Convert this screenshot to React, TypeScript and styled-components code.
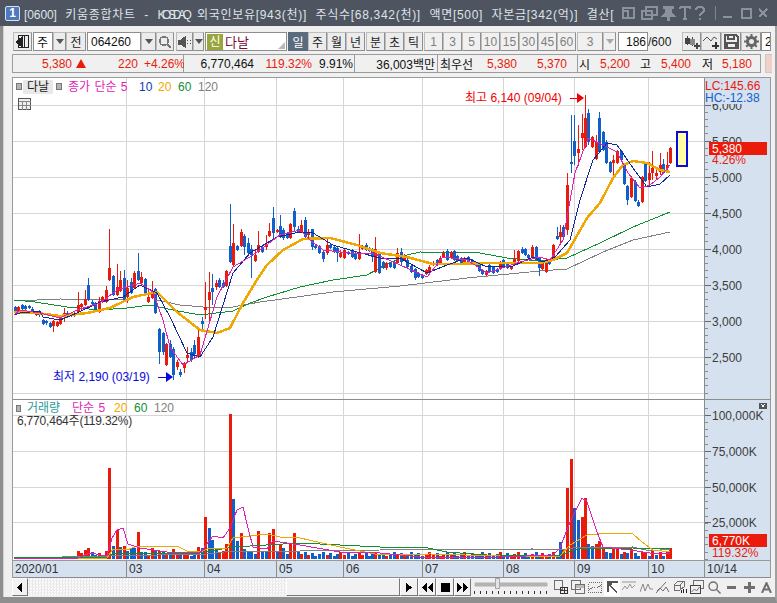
import styled, { createGlobalStyle } from 'styled-components';

const FONT = '"Liberation Sans", "Noto Sans CJK KR", sans-serif';
const RED = '#ea1b0b';
const BLUE = '#1160c9';
const NAVY = '#12289a';
const PINK = '#e01fb4';
const ORANGE = '#f0a800';
const GREEN = '#109033';
const GRAY = '#808080';
const GRID = '#d6d6d6';
const AXIS = '#d6e1ef';

type Candle = [number, number, number, number, number, 'r' | 'b'];

// x, body top, body bottom, wick top, wick bottom (page pixels)
const candles: Candle[] = [
  [15, 307, 311, 306, 312, 'b'], [18, 307, 312, 306, 313, 'r'], [22, 305, 309, 304, 310, 'b'], [25, 306, 309, 305, 310, 'b'],
  [29, 306, 308, 305, 309, 'b'], [32, 309, 313, 307, 314, 'b'], [36, 312, 315, 311, 316, 'r'], [39, 312, 315, 310, 317, 'b'],
  [43, 320, 324, 319, 325, 'b'], [46, 321, 323, 320, 325, 'b'], [50, 323, 327, 322, 328, 'b'], [53, 321, 326, 320, 332, 'r'],
  [57, 322, 326, 321, 327, 'r'], [60, 317, 324, 316, 325, 'r'], [64, 313, 317, 308, 322, 'r'], [67, 313, 316, 311, 318, 'b'],
  [71, 313, 316, 312, 317, 'b'], [74, 313, 316, 312, 317, 'r'], [78, 305, 312, 292, 313, 'r'], [81, 304, 307, 303, 311, 'r'],
  [85, 299, 305, 290, 306, 'r'], [88, 285, 300, 278, 301, 'b'], [92, 302, 304, 300, 306, 'b'], [95, 303, 311, 302, 312, 'b'],
  [99, 301, 312, 297, 313, 'r'], [102, 297, 302, 296, 303, 'r'], [106, 290, 302, 286, 303, 'r'], [109, 268, 280, 229, 281, 'r'],
  [113, 276, 295, 275, 296, 'b'], [117, 287, 295, 264, 296, 'r'], [120, 280, 291, 271, 292, 'r'], [124, 278, 300, 270, 302, 'b'],
  [127, 288, 297, 280, 303, 'r'], [131, 282, 293, 278, 294, 'b'], [134, 273, 288, 271, 289, 'r'], [138, 271, 280, 253, 281, 'b'],
  [141, 277, 283, 272, 284, 'r'], [145, 279, 294, 278, 295, 'b'], [148, 297, 302, 290, 303, 'r'], [152, 291, 298, 281, 299, 'r'],
  [155, 289, 313, 288, 314, 'b'], [159, 329, 352, 328, 364, 'b'], [163, 333, 352, 332, 355, 'b'], [166, 344, 365, 343, 366, 'r'],
  [170, 344, 357, 340, 358, 'b'], [173, 349, 375, 347, 380, 'b'], [177, 362, 367, 360, 370, 'r'], [180, 372, 375, 369, 377, 'b'],
  [184, 363, 368, 362, 373, 'r'], [187, 355, 358, 347, 362, 'r'], [191, 352, 360, 348, 362, 'b'], [194, 345, 354, 340, 358, 'b'],
  [198, 337, 357, 328, 358, 'r'], [202, 321, 324, 317, 330, 'b'], [205, 307, 310, 282, 319, 'r'], [209, 292, 300, 272, 323, 'r'],
  [212, 288, 292, 274, 305, 'b'], [216, 283, 287, 280, 290, 'r'], [219, 280, 287, 278, 288, 'b'], [223, 283, 287, 280, 288, 'b'],
  [226, 271, 286, 270, 287, 'r'], [230, 246, 262, 204, 263, 'b'], [233, 243, 265, 224, 266, 'r'], [237, 246, 250, 245, 251, 'b'],
  [241, 232, 246, 229, 247, 'r'], [244, 236, 247, 234, 255, 'b'], [248, 243, 253, 238, 254, 'b'], [251, 249, 255, 245, 278, 'b'],
  [255, 255, 261, 250, 262, 'r'], [258, 245, 252, 231, 253, 'r'], [262, 247, 252, 246, 253, 'b'], [266, 244, 247, 235, 250, 'r'],
  [269, 231, 236, 223, 237, 'r'], [273, 218, 233, 207, 240, 'b'], [277, 230, 232, 229, 233, 'r'], [280, 226, 235, 215, 238, 'b'],
  [283, 230, 238, 228, 240, 'b'], [287, 233, 238, 232, 239, 'b'], [290, 224, 238, 223, 239, 'r'], [294, 211, 227, 208, 232, 'b'],
  [298, 229, 232, 226, 233, 'b'], [301, 225, 232, 220, 233, 'r'], [305, 220, 237, 217, 240, 'b'], [308, 232, 235, 229, 238, 'r'],
  [312, 229, 247, 229, 250, 'b'], [315, 246, 248, 245, 249, 'b'], [319, 246, 253, 245, 254, 'b'], [323, 252, 259, 250, 262, 'b'],
  [327, 245, 253, 239, 255, 'r'], [330, 245, 248, 243, 249, 'b'], [334, 247, 252, 245, 253, 'b'], [337, 248, 253, 247, 262, 'b'],
  [340, 253, 257, 250, 258, 'r'], [344, 250, 258, 248, 259, 'r'], [348, 252, 254, 251, 255, 'b'], [352, 250, 257, 249, 258, 'b'],
  [355, 253, 259, 252, 260, 'b'], [359, 252, 259, 234, 260, 'r'], [362, 247, 249, 245, 250, 'r'], [366, 245, 250, 243, 251, 'b'],
  [369, 248, 251, 247, 252, 'b'], [372, 249, 257, 248, 262, 'b'], [375, 249, 272, 237, 273, 'r'], [379, 253, 273, 252, 274, 'b'],
  [383, 262, 268, 261, 269, 'b'], [386, 263, 268, 262, 270, 'r'], [390, 263, 267, 262, 268, 'b'], [394, 262, 268, 260, 269, 'b'],
  [397, 253, 263, 248, 264, 'r'], [401, 252, 262, 248, 265, 'b'], [404, 255, 260, 254, 261, 'r'], [407, 260, 267, 257, 268, 'b'],
  [411, 266, 272, 265, 273, 'b'], [415, 269, 278, 268, 280, 'b'], [418, 273, 277, 272, 278, 'b'], [422, 275, 278, 274, 279, 'b'],
  [426, 270, 274, 269, 275, 'r'], [429, 267, 273, 265, 274, 'r'], [433, 263, 265, 261, 266, 'r'], [437, 260, 265, 259, 266, 'b'],
  [440, 258, 263, 256, 264, 'r'], [443, 253, 257, 251, 258, 'r'], [447, 251, 260, 249, 261, 'b'], [451, 252, 258, 251, 259, 'r'],
  [454, 251, 260, 250, 261, 'b'], [457, 256, 261, 255, 262, 'b'], [461, 258, 263, 257, 264, 'b'], [464, 258, 264, 257, 265, 'r'],
  [468, 257, 263, 256, 264, 'b'], [472, 260, 264, 259, 265, 'b'], [476, 263, 266, 262, 267, 'b'], [479, 265, 271, 264, 272, 'b'],
  [482, 270, 274, 269, 275, 'b'], [486, 271, 275, 270, 276, 'r'], [489, 265, 272, 262, 273, 'b'], [493, 267, 273, 266, 274, 'b'],
  [497, 269, 272, 268, 273, 'b'], [500, 263, 269, 261, 270, 'r'], [503, 260, 267, 259, 268, 'b'], [507, 263, 268, 262, 269, 'b'],
  [511, 267, 269, 266, 270, 'r'], [514, 259, 265, 250, 266, 'r'], [518, 251, 261, 250, 262, 'r'], [522, 249, 253, 247, 254, 'b'],
  [525, 249, 255, 248, 256, 'b'], [528, 255, 258, 254, 259, 'b'], [532, 247, 257, 245, 258, 'r'], [536, 247, 260, 246, 261, 'b'],
  [539, 258, 268, 257, 276, 'b'], [542, 263, 269, 262, 270, 'r'], [546, 260, 272, 259, 273, 'r'], [549, 261, 264, 260, 265, 'b'],
  [553, 245, 260, 244, 261, 'r'], [557, 236, 239, 227, 240, 'b'], [560, 232, 237, 225, 243, 'r'], [563, 227, 237, 225, 240, 'b'],
  [567, 185, 230, 173, 235, 'r'], [571, 162, 164, 115, 173, 'b'], [574, 141, 156, 115, 165, 'b'], [578, 149, 153, 125, 166, 'r'],
  [582, 133, 138, 114, 150, 'r'], [585, 118, 147, 95, 148, 'r'], [588, 113, 142, 109, 145, 'b'], [592, 137, 147, 136, 148, 'r'],
  [596, 142, 159, 135, 160, 'r'], [599, 118, 152, 112, 153, 'b'], [603, 132, 150, 131, 151, 'b'], [606, 142, 163, 140, 164, 'b'],
  [610, 162, 172, 161, 173, 'b'], [613, 160, 163, 155, 176, 'r'], [617, 151, 163, 150, 164, 'r'], [621, 151, 160, 150, 161, 'b'],
  [624, 164, 184, 163, 185, 'b'], [627, 186, 200, 185, 205, 'b'], [631, 178, 197, 176, 198, 'r'], [635, 182, 201, 180, 202, 'b'],
  [638, 202, 206, 200, 207, 'b'], [642, 177, 202, 176, 203, 'r'], [645, 164, 181, 162, 182, 'b'], [649, 173, 180, 162, 185, 'r'],
  [652, 168, 173, 151, 180, 'r'], [656, 173, 176, 170, 180, 'r'], [660, 165, 172, 153, 175, 'r'], [663, 164, 173, 159, 174, 'b'],
  [667, 165, 168, 152, 170, 'r'], [670, 148, 163, 147, 164, 'r'],
];

const priceLines: { d: string; color: string; w: number }[] = [
  { color: GRAY, w: 1, d: '14,301 60,299 127,300 157,300 180,305 203,307 233,307 260,302 275,300 333,292 400,286 467,278 540,271 567,269 603,252 633,240 670,232' },
  { color: GREEN, w: 1, d: '14,300 35,302 67,307 100,310 127,308 150,305 173,310 200,315 233,311 250,303 267,297 300,287 333,280 367,275 387,264 407,255 420,252 480,253 507,258 540,261 567,258 600,243 633,227 670,212' },
  { color: ORANGE, w: 2.5, d: '14,312 37,313 60,316 87,313 110,308 133,297 157,292 177,312 200,330 217,333 230,328 243,303 255,283 267,265 283,250 303,239 330,238 357,245 380,253 407,257 433,264 453,264 493,263 540,263 553,260 567,253 587,218 600,203 613,178 623,165 633,161 647,163 660,170 670,172' },
  { color: NAVY, w: 1, d: '14,315 20,313 40,311 43,317 60,320 77,313 100,302 123,297 140,285 157,293 170,317 187,353 200,357 213,337 233,273 250,253 277,237 300,232 313,233 333,245 357,252 380,258 400,258 427,273 447,265 467,258 487,267 513,266 533,257 543,262 555,257 570,240 580,200 593,160 607,143 617,145 633,168 647,187 660,184 670,175' },
  { color: PINK, w: 1, d: '14,315 20,310 40,313 60,318 77,310 100,303 117,290 140,283 153,292 163,320 170,347 183,365 200,355 217,297 233,267 253,255 280,235 300,230 310,240 323,250 350,253 373,253 400,265 427,277 443,257 467,260 487,273 520,262 540,257 550,260 563,240 575,173 588,138 603,145 617,152 628,173 640,188 650,185 660,177 670,165' },
];

const volumeLines: { d: string; color: string; w: number }[] = [
  { color: GRAY, w: 1, d: '14,558 110,556 207,554 233,551 300,551 380,550 533,549 560,550 573,548 633,547 650,551 670,549' },
  { color: GREEN, w: 1, d: '14,557 107,557 113,554 200,553 233,547 300,543 380,547 423,547 447,552 500,556 560,555 577,549 633,548 650,549 670,548' },
  { color: ORANGE, w: 1, d: '14,558 107,558 113,549 127,550 137,546 177,546 187,551 203,551 207,549 227,548 233,538 267,534 280,537 300,538 340,547 380,555 430,554 500,556 560,556 570,545 587,535 607,533 633,534 642,542 653,550 670,552' },
  { color: PINK, w: 1, d: '14,558 78,558 90,553 107,556 112,538 117,530 123,528 128,544 140,548 167,552 200,553 213,536 223,538 230,528 237,510 243,507 248,528 253,547 267,549 273,541 300,545 340,552 380,553 430,558 500,557 553,555 560,548 570,522 582,498 587,502 597,532 603,547 630,550 650,553 670,554' },
];

// volume bars that stand out; the others stay low and take the candle colour
const volumeBars: [number, number, 'r' | 'b'][] = [
  [78, 551, 'r'], [85, 550, 'r'], [88, 548, 'r'], [106, 551, 'r'], [109, 468, 'r'], [113, 546, 'b'], [117, 530, 'r'], [120, 547, 'b'], [124, 546, 'r'],
  [127, 551, 'b'], [131, 548, 'b'], [134, 548, 'b'], [138, 532, 'r'], [141, 552, 'b'], [152, 548, 'r'], [155, 551, 'b'], [159, 551, 'r'], [173, 549, 'r'],
  [198, 547, 'r'], [202, 548, 'b'], [205, 517, 'r'], [209, 528, 'b'], [212, 540, 'b'], [216, 549, 'b'], [219, 552, 'r'], [223, 551, 'r'], [226, 544, 'r'],
  [230, 414, 'r'], [233, 499, 'b'], [237, 541, 'b'], [241, 533, 'r'], [244, 549, 'b'], [248, 552, 'b'], [251, 552, 'b'], [255, 554, 'b'], [258, 531, 'r'],
  [262, 552, 'b'], [266, 552, 'b'], [269, 533, 'r'], [273, 529, 'r'], [277, 552, 'b'], [280, 544, 'r'], [283, 548, 'b'], [287, 554, 'b'], [290, 544, 'r'],
  [294, 533, 'r'], [298, 552, 'b'], [556, 540, 'r'], [560, 542, 'b'], [563, 549, 'r'], [567, 488, 'r'], [571, 459, 'r'], [574, 508, 'b'], [578, 520, 'b'],
  [582, 517, 'r'], [585, 498, 'r'], [588, 544, 'b'], [592, 546, 'b'], [596, 544, 'r'], [599, 541, 'r'], [603, 547, 'r'], [606, 552, 'b'], [610, 553, 'b'],
  [613, 549, 'r'], [617, 549, 'r'], [621, 554, 'b'], [624, 552, 'r'], [627, 553, 'b'], [631, 549, 'r'], [635, 553, 'b'], [638, 556, 'b'], [642, 552, 'r'],
  [645, 552, 'r'], [649, 556, 'b'], [652, 550, 'r'], [656, 555, 'b'], [660, 552, 'r'], [663, 556, 'b'], [667, 552, 'r'], [670, 548, 'r'],
];

const monthLines = [126, 204, 276, 343, 422, 503, 574, 648];
const priceRows = [105, 141, 177, 213, 249, 285, 321, 357, 393];
const volumeRows = [415, 451, 487, 522];

const priceLabels: [number, string][] = [[105, '6,000'], [141, '5,500'], [177, '5,000'], [213, '4,500'], [249, '4,000'], [285, '3,500'], [321, '3,000'], [357, '2,500']];
const volumeLabels: [number, string][] = [[415, '100,000K'], [451, '75,000K'], [487, '50,000K'], [522, '25,000K']];

const timeCells: [string, number][] = [['2020/01', 113], ['03', 78], ['04', 72], ['05', 67], ['06', 79], ['07', 81], ['08', 71], ['09', 74], ['10', 56], ['10/14', 66]];

const colorOf = (c: 'r' | 'b') => (c === 'r' ? RED : BLUE);

const Global = createGlobalStyle`
  html, body { margin: 0; padding: 0; background: #f0f0f0; }
  body { font-family: ${FONT}; font-size: 12px; }
`;

const Window = styled.div`
  width: 777px;
  height: 603px;
  display: flex;
  flex-direction: column;
  overflow: hidden;
  background: #f0f0f0;
`;

const TitleBar = styled.div`
  height: 26px;
  flex: none;
  display: flex;
  align-items: center;
  padding-left: 5px;
  background: #4e5560;
  color: #dfe3e8;
  box-sizing: border-box;
`;

const AppBadge = styled.div`
  width: 13px;
  height: 13px;
  flex: none;
  border: 1px solid #d8e2f2;
  border-radius: 2px;
  background: #4f79bd;
  color: #fff;
  font: bold 12px/13px ${FONT};
  text-align: center;
`;

const TitleText = styled.div`
  width: 594px;
  margin-left: 4px;
  flex: none;
  font-size: 12px;
  letter-spacing: 0.7px;
  word-spacing: 4.5px;
  white-space: nowrap;
  overflow: hidden;
`;

const NarrowWord = styled.span<{ $ls: number }>`
  letter-spacing: ${(p) => p.$ls}px;
`;

const TitleTools = styled.div`
  display: flex;
  align-items: center;
  height: 100%;
  margin-left: 3px;
  color: #8b929b;
`;

const TitleDivider = styled.span`
  width: 1px;
  height: 14px;
  margin: 0 7px 0 9px;
  background: #80868e;
`;

const Content = styled.div`
  flex: 1;
  display: flex;
  flex-direction: column;
  box-sizing: border-box;
  padding: 6px 4px 0 8px;
  border-left: 3px solid #8e8e8e;
  border-right: 2px solid #a0a0a0;
  border-bottom: 6px solid #8e8e8e;
  box-shadow: inset 1px 0 #d0d0d0;
  min-height: 0;
`;

const Toolbar = styled.div`
  height: 19px;
  flex: none;
  margin-left: 2px;
  display: flex;
  align-items: stretch;
`;

const ToolButton = styled.div<{ $w: number; $gap?: number; $active?: boolean; $muted?: boolean }>`
  width: ${(p) => p.$w}px;
  margin-left: ${(p) => p.$gap ?? 0}px;
  flex: none;
  box-sizing: border-box;
  display: flex;
  align-items: center;
  justify-content: center;
  border: 1px solid ${(p) => (p.$active ? '#5a6b7e' : '#bdbdbd')};
  border-right-color: ${(p) => (p.$active ? '#5a6b7e' : '#8f8f8f')};
  border-bottom-color: ${(p) => (p.$active ? '#5a6b7e' : '#8f8f8f')};
  background: ${(p) => (p.$active ? '#5a6b7e' : p.$muted ? '#f0f0f0' : '#ececec')};
  color: ${(p) => (p.$active ? '#fff' : p.$muted ? '#7f7f7f' : '#1c1c1c')};
  font-size: 12px;
  overflow: hidden;
`;

const FieldBox = styled.div<{ $w: number; $gap?: number }>`
  width: ${(p) => p.$w}px;
  margin-left: ${(p) => p.$gap ?? 0}px;
  flex: none;
  box-sizing: border-box;
  display: flex;
  align-items: center;
  padding: 0 3px;
  border: 1px solid #8e8e8e;
  background: #fff;
  color: #111;
  font-size: 12px;
  overflow: hidden;
  white-space: nowrap;
`;

const NumberField = styled(FieldBox)`
  justify-content: flex-end;
  padding: 0 1px 0 0;
`;

const NameBox = styled(FieldBox)`
  position: relative;
  padding: 0 1px;
  color: #7a0a3c;
  font-size: 13px;
`;

const NewTag = styled.span`
  width: 16px;
  height: 16px;
  margin-right: 2px;
  background: #9aa63c;
  color: #fff;
  font-size: 12px;
  line-height: 16px;
  text-align: center;
`;

const ResizeCorner = styled.span`
  position: absolute;
  right: 1px;
  bottom: 1px;
  width: 0;
  height: 0;
  border-left: 7px solid transparent;
  border-bottom: 7px solid #b9b9b9;
`;

const Caret = styled.span<{ $light?: boolean }>`
  width: 0;
  height: 0;
  border-left: 4px solid transparent;
  border-right: 4px solid transparent;
  border-top: 5px solid ${(p) => (p.$light ? '#a8a8a8' : '#555')};
`;

const PageTotal = styled.div`
  width: 26px;
  flex: none;
  display: flex;
  align-items: center;
  color: #222;
  font-size: 12px;
`;

const InfoBar = styled.div`
  height: 19px;
  flex: none;
  margin: 3px 0 4px 1px;
  display: flex;
  align-items: stretch;
`;

const InfoCell = styled.div<{ $w: number }>`
  width: ${(p) => p.$w}px;
  flex: none;
  box-sizing: border-box;
  display: flex;
  align-items: center;
  background: #f0f0f0;
  border: 1px solid #9c9c9c;
  border-left-width: 0;
  &:first-child { border-left-width: 1px; }
`;

const Value = styled.span<{ $w: number; $color?: string; $left?: boolean }>`
  width: ${(p) => p.$w}px;
  flex: none;
  box-sizing: border-box;
  padding-left: ${(p) => (p.$left ? 2 : 0)}px;
  text-align: ${(p) => (p.$left ? 'left' : 'right')};
  color: ${(p) => p.$color ?? '#111'};
  white-space: nowrap;
`;

const UpMark = styled.span`
  width: 0;
  height: 0;
  margin: 0 4px 0 4px;
  border-left: 5px solid transparent;
  border-right: 5px solid transparent;
  border-bottom: 9px solid ${RED};
`;

const PinkSwatch = styled.div`
  width: 6px;
  margin-left: 4px;
  flex: none;
  background: #f2d0c8;
  border: 1px solid #c8c8c8;
  border-right: 0;
`;

const ChartFrame = styled.div`
  width: 759px;
  margin-left: 1px;
  flex: none;
  box-sizing: border-box;
  border: 1px solid #9a9a9a;
  border-bottom: 0;
  background: #fff;
`;

const PanePlot = styled.svg`
  display: block;
  width: 757px;
  font-family: ${FONT};
`;

const PaneDivider = styled.div`
  height: 1px;
  background: #8c8c8c;
`;

const TimeAxis = styled.div`
  height: 18px;
  display: flex;
  box-sizing: border-box;
  border-top: 1px solid #9a9a9a;
  border-bottom: 1px solid #8c8c8c;
  background: ${AXIS};
`;

const TimeCell = styled.div<{ $w: number }>`
  width: ${(p) => p.$w}px;
  flex: none;
  box-sizing: border-box;
  padding-left: 2px;
  border-left: 1px solid #8c8c8c;
  color: #333;
  line-height: 16px;
  &:first-child { border-left: 0; }
`;

const ControlRow = styled.div`
  height: 18px;
  width: 760px;
  margin-left: 1px;
  flex: none;
  display: flex;
  align-items: stretch;
`;

const ScrollButton = styled.div<{ $w: number }>`
  width: ${(p) => p.$w}px;
  flex: none;
  box-sizing: border-box;
  display: flex;
  align-items: center;
  justify-content: center;
  background: #f2f2f2;
  border: 1px solid #fff;
  border-right-color: #777;
  border-bottom-color: #777;
  color: #000;
`;

const ScrollTrack = styled.div`
  width: 258px;
  flex: none;
  background: repeating-conic-gradient(#e9e9e9 0 25%, #fcfcfc 0 50%) 0 0 / 3px 3px;
`;

const SliderBox = styled.div`
  width: 74px;
  margin: 0 5px 0 3px;
  flex: none;
  position: relative;
`;

const SliderRail = styled.div`
  height: 3px;
  margin-top: 4px;
  background: #b4b4b4;
  border: 1px solid #cfcfcf;
  border-radius: 2px;
`;

const SliderThumb = styled.div`
  position: absolute;
  left: 21px;
  top: 0;
  width: 5px;
  height: 11px;
  background: #e4e4e4;
  border: 1px solid #a8a8a8;
  box-sizing: border-box;
`;

const SliderTicks = styled.div`
  height: 3px;
  margin-top: 4px;
  background: repeating-linear-gradient(90deg, #333 0 1px, transparent 1px 6px);
`;

const ViewTools = styled.div`
  flex: 1;
  display: flex;
  align-items: center;
  gap: 1px;
  color: #6f6f6f;
`;

const ViewTool = styled.span<{ $on?: boolean; $w?: number }>`
  width: ${(p) => p.$w ?? 16}px;
  height: 18px;
  flex: none;
  display: flex;
  align-items: center;
  justify-content: center;
  background: ${(p) => (p.$on ? '#fff' : 'transparent')};
`;

const Icon = styled.svg.attrs({ fill: 'none', stroke: 'currentColor' })`
  display: block;
  shape-rendering: crispEdges;
`;

const AxisLabel = styled.text`
  font-size: 12px;
  fill: #3c3c3c;
`;

const LegendText = styled.text<{ $color: string }>`
  font-size: 12px;
  word-spacing: 1px;
  fill: ${(p) => p.$color};
`;

const NoteText = styled.text<{ $color: string }>`
  font-size: 12px;
  fill: ${(p) => p.$color};
`;

const VolumeNote = styled(NoteText)`
  letter-spacing: -0.2px;
`;

function AxisTicks({ top, bottom, step }: { top: number; bottom: number; step: number }) {
  const out = [];
  for (let y = top; y < bottom; y += step) out.push(y);
  return (
    <g stroke="#8c8c8c" shapeRendering="crispEdges">
      {out.map((y) => (
        <line key={y} x1="705" x2="708" y1={y} y2={y} />
      ))}
    </g>
  );
}

function PricePane() {
  return (
    <PanePlot viewBox="13 78 757 321" height="321">
      {priceRows.map((y) => (
        <line key={y} x1="13" x2="705" y1={y} y2={y} stroke={GRID} shapeRendering="crispEdges" />
      ))}
      {monthLines.map((x) => (
        <line key={x} x1={x} x2={x} y1="78" y2="399" stroke={GRID} shapeRendering="crispEdges" />
      ))}
      <rect x="704" y="78" width="66" height="321" fill={AXIS} />
      <line x1="704.5" x2="704.5" y1="78" y2="399" stroke="#8c8c8c" shapeRendering="crispEdges" />
      <AxisTicks top={105} bottom={399} step={7.2} />
      {priceLabels.map(([y, t]) => (
        <g key={t}>
          <line x1="705" x2="711" y1={y} y2={y} stroke="#666" shapeRendering="crispEdges" />
          <AxisLabel x="712" y={y + 4.5}>{t}</AxisLabel>
        </g>
      ))}
      <rect x="705" y="78" width="65" height="26" fill={AXIS} />
      <NoteText x="705" y="90" $color="#e8190c">LC:145.66</NoteText>
      <NoteText x="705" y="102" $color="#1160c9">HC:-12.38</NoteText>
      <rect x="709" y="142" width="58" height="13" fill={RED} />
      <NoteText x="712" y="153" $color="#fff">5,380</NoteText>
      <NoteText x="712" y="164" $color={RED}>4.26%</NoteText>

      {priceLines.slice(0, 2).map((l) => (
        <polyline key={l.color} points={l.d} fill="none" stroke={l.color} strokeWidth={l.w} shapeRendering="crispEdges" />
      ))}
      <g shapeRendering="crispEdges">
        {candles.map(([x, top, bot, wt, wb, c]) => (
          <g key={x} fill={colorOf(c)}>
            <rect x={x} y={wt} width="1" height={wb - wt} />
            <rect x={x - 1} y={top} width="3" height={Math.max(bot - top, 1)} />
          </g>
        ))}
      </g>
      {priceLines.slice(2).map((l) => (
        <polyline key={l.color} points={l.d} fill="none" stroke={l.color} strokeWidth={l.w} shapeRendering="crispEdges" />
      ))}

      <rect x="16.5" y="83.5" width="5" height="6" fill="#b4b4b4" stroke="#777" />
      <rect x="23" y="80" width="30" height="14" rx="1" fill="#e8e8e8" />
      <LegendText x="27" y="91" $color="#222">다날</LegendText>
      <rect x="56.5" y="83.5" width="5" height="6" fill="#b4b4b4" stroke="#777" />
      <LegendText x="68" y="91" $color={PINK}>종가 단순 5</LegendText>
      <LegendText x="139" y="91" $color="#1038b8">10</LegendText>
      <LegendText x="158" y="91" $color={ORANGE}>20</LegendText>
      <LegendText x="178" y="91" $color={GREEN}>60</LegendText>
      <LegendText x="198" y="91" $color={GRAY}>120</LegendText>
      <g fill="none" stroke="#555" shapeRendering="crispEdges">
        <rect x="18.5" y="98.5" width="12" height="11" fill="#eee" />
        <path d="M18.5 101.5h12M18.5 105.5h12M22.5 101.5v8M26.5 101.5v8" stroke="#888" />
      </g>

      <NoteText x="465" y="102" $color="#f00000">최고 6,140 (09/04)</NoteText>
      <path d="M570 98h8" stroke="#f00000" shapeRendering="crispEdges" />
      <path d="M577 93l7 5-7 5z" fill="#f00000" />
      <NoteText x="53" y="381" $color="#0a0adc">최저 2,190 (03/19)</NoteText>
      <path d="M158 377h8" stroke="#0a0adc" shapeRendering="crispEdges" />
      <path d="M166 372l7 5-7 5z" fill="#0a0adc" />

      <rect x="677" y="132" width="10" height="34" fill="#ffffa6" stroke="#0a0adc" strokeWidth="2" shapeRendering="crispEdges" />
    </PanePlot>
  );
}

function VolumePane() {
  const bars = candles
    .filter(([x]) => x > 14)
    .map(([x, , , , , c], i) => {
      const hit = volumeBars.find((b) => Math.abs(b[0] - x) < 1);
      if (hit) return { x, top: hit[1], c: hit[2] };
      const low = x < 78 ? 1 : 3 + ((i * 7) % 5);
      return { x, top: 559 - low, c };
    });

  return (
    <PanePlot viewBox="13 400 757 160" height="160">
      {volumeRows.map((y) => (
        <line key={y} x1="13" x2="705" y1={y} y2={y} stroke={GRID} shapeRendering="crispEdges" />
      ))}
      {monthLines.map((x) => (
        <line key={x} x1={x} x2={x} y1="400" y2="560" stroke={GRID} shapeRendering="crispEdges" />
      ))}
      <rect x="704" y="400" width="66" height="160" fill={AXIS} />
      <line x1="704.5" x2="704.5" y1="400" y2="560" stroke="#8c8c8c" shapeRendering="crispEdges" />
      <AxisTicks top={408} bottom={560} step={7.2} />
      {volumeLabels.map(([y, t]) => (
        <g key={t}>
          <line x1="705" x2="711" y1={y} y2={y} stroke="#666" shapeRendering="crispEdges" />
          <AxisLabel x="712" y={y + 4.5}>{t}</AxisLabel>
        </g>
      ))}
      <rect x="759" y="403" width="8" height="6" fill="#555" />
      <path d="M761.5 404.5l3 3M764.5 404.5l-3 3" stroke="#fff" shapeRendering="crispEdges" />
      <rect x="709" y="534" width="58" height="13" fill={RED} />
      <NoteText x="712" y="545" $color="#fff">6,770K</NoteText>
      <NoteText x="712" y="557" $color={RED}>119.32%</NoteText>

      <g shapeRendering="crispEdges">
        {bars.map((b) => (
          <rect key={b.x} x={b.x - 1} y={b.top} width="3" height={559 - b.top} fill={colorOf(b.c)} />
        ))}
      </g>
      {volumeLines.map((l) => (
        <polyline key={l.color} points={l.d} fill="none" stroke={l.color} strokeWidth={l.w} shapeRendering="crispEdges" />
      ))}

      <rect x="16.5" y="405.5" width="4" height="6" fill="#b4b4b4" stroke="#777" />
      <LegendText x="27" y="412" $color="#2a9a9a">거래량</LegendText>
      <LegendText x="72" y="412" $color={PINK}>단순 5</LegendText>
      <LegendText x="114" y="412" $color={ORANGE}>20</LegendText>
      <LegendText x="134" y="412" $color={GREEN}>60</LegendText>
      <LegendText x="154" y="412" $color={GRAY}>120</LegendText>
      <VolumeNote x="17" y="425" $color="#333">6,770,464주(119.32%)</VolumeNote>
    </PanePlot>
  );
}

function TitleIcon({ w, children, fill }: { w: number; children: React.ReactNode; fill?: boolean }) {
  return (
    <Icon width={w} height="16" viewBox={`0 0 ${w} 16`} strokeWidth="1.5" style={fill ? { fill: 'currentColor' } : undefined}>
      {children}
    </Icon>
  );
}

export default function App() {
  return (
    <>
      <Global />
      <Window>
        <TitleBar>
          <AppBadge>1</AppBadge>
          <TitleText><NarrowWord $ls={-0.1}>[0600]</NarrowWord> 키움종합차트 - <NarrowWord $ls={-3.4}>KOSDAQ</NarrowWord> 외국인보유[943(천)] 주식수[68,342(천)] 액면[500] 자본금[342(억)] 결산[</TitleText>
          <TitleTools>
            <TitleIcon w={20}><path d="M2 3h11v10H2zM2 6h5v7" /></TitleIcon>
            <TitleIcon w={19}><path d="M5 2h11v8H5zM1 6h10v8H1z" /></TitleIcon>
            <TitleIcon w={19} fill><path d="M4 2h9v1l-2 1v4l3 3H9v4H8v-4H3l3-3V4L4 3z" /></TitleIcon>
            <TitleIcon w={16}><path d="M1 2h10v2M6 2v12M4 14h4M1 2v2" strokeWidth="2" /></TitleIcon>
            <TitleIcon w={11}><path d="M1 5c0-4 8-4 8 0 0 3-4 3-4 6M5 13v2" strokeWidth="2" /></TitleIcon>
            <TitleDivider />
            <TitleIcon w={18}><path d="M0 12h9" strokeWidth="2" /></TitleIcon>
            <TitleIcon w={18}><path d="M1 4h9v9H1zM1 4h9" /></TitleIcon>
            <TitleIcon w={9}><path d="M0 4l8 8M8 4l-8 8" /></TitleIcon>
          </TitleTools>
        </TitleBar>

        <Content>
          <Toolbar>
            <ToolButton $w={19}>
              <Icon width="15" height="15" viewBox="0 0 15 15" color="#222">
                <path d="M3.5 1.5h10v12h-10zM9.5 1.5v12" />
                <path d="M1 8l6-5v10z" fill="#222" />
              </Icon>
            </ToolButton>
            <FieldBox $w={20} $gap={1}>주</FieldBox>
            <ToolButton $w={13}><Caret /></ToolButton>
            <ToolButton $w={20}>전</ToolButton>
            <FieldBox $w={54} $gap={1}>064260</FieldBox>
            <ToolButton $w={15}><Caret /></ToolButton>
            <ToolButton $w={18}>
              <Icon width="14" height="14" viewBox="0 0 14 14" color="#777" strokeWidth="1.5">
                <circle cx="6" cy="6" r="4.2" /><path d="M9 9l4 4" />
              </Icon>
            </ToolButton>
            <ToolButton $w={17} $gap={2}>
              <Icon width="13" height="12" viewBox="0 0 13 12" color="#555">
                <path d="M0 4h3l4-3v10L3 8H0z" fill="#555" /><path d="M9.5 4v1M9.5 7v1M12 4v1M12 7v1" />
              </Icon>
            </ToolButton>
            <ToolButton $w={11}><Caret /></ToolButton>
            <NameBox $w={82} $gap={1}><NewTag>신</NewTag>다날<ResizeCorner /></NameBox>
            <ToolButton $w={20} $gap={1} $active>일</ToolButton>
            <ToolButton $w={19}>주</ToolButton>
            <ToolButton $w={19}>월</ToolButton>
            <ToolButton $w={19}>년</ToolButton>
            <ToolButton $w={19} $gap={1}>분</ToolButton>
            <ToolButton $w={19}>초</ToolButton>
            <ToolButton $w={19}>틱</ToolButton>
            {['1', '3', '5', '10', '15', '30', '45', '60'].map((n, i) => (
              <ToolButton key={n} $w={19} $gap={i === 0 ? 1 : 0} $muted>{n}</ToolButton>
            ))}
            <ToolButton $w={26} $gap={1} $muted>3</ToolButton>
            <ToolButton $w={13} $muted><Caret $light /></ToolButton>
            <NumberField $w={30} $gap={2}>186</NumberField>
            <PageTotal>/600</PageTotal>
            <ToolButton $w={19} $gap={8}>
              <Icon width="16" height="14" viewBox="0 0 16 14" color="#444">
                <path d="M3 1v9M8 2v9" /><rect x="1" y="3" width="4" height="5" fill="#444" /><rect x="6" y="4" width="4" height="5" fill="#888" stroke="#888" />
                <path d="M12.5 8v6M10 11h6" strokeWidth="2" />
              </Icon>
            </ToolButton>
            <ToolButton $w={20}>
              <Icon width="17" height="14" viewBox="0 0 17 14" color="#555">
                <path d="M0 6l4-4 4 4 3-4 3 2" style={{ shapeRendering: 'auto' }} />
                <path d="M12.5 7v7M9 10.5h7" strokeWidth="2" color="#333" />
              </Icon>
            </ToolButton>
            <ToolButton $w={20}>
              <Icon width="15" height="15" viewBox="0 0 15 15" color="#555" strokeWidth="1.5">
                <path d="M1 1h11l2 2v11H1zM4 1v4h6V1M3 14V9h9v5" />
              </Icon>
            </ToolButton>
            <ToolButton $w={20}>
              <Icon width="15" height="15" viewBox="0 0 15 15" color="#666" strokeWidth="3" style={{ shapeRendering: 'auto' }}>
                <circle cx="7.5" cy="7.5" r="4" />
                <path d="M7.5 0v3M7.5 12v3M0 7.5h3M12 7.5h3M2.2 2.2l2 2M10.8 10.8l2 2M2.2 12.8l2-2M10.8 4.2l2-2" strokeWidth="2" />
              </Icon>
            </ToolButton>
            <FieldBox $w={10}>20</FieldBox>
          </Toolbar>

          <InfoBar>
            <InfoCell $w={172}>
              <Value $w={59} $color={RED}>5,380</Value>
              <UpMark />
              <Value $w={48} $color={RED}>220</Value>
              <Value $w={47} $color={RED}>+4.26%</Value>
            </InfoCell>
            <InfoCell $w={171}>
              <Value $w={70}>6,770,464</Value>
              <Value $w={58} $color={RED}>119.32%</Value>
              <Value $w={41}>9.91%</Value>
            </InfoCell>
            <InfoCell $w={83}><Value $w={80}>36,003백만</Value></InfoCell>
            <InfoCell $w={140}>
              <Value $w={40} $left>최우선</Value>
              <Value $w={39} $color={RED}>5,380</Value>
              <Value $w={50} $color={RED}>5,370</Value>
            </InfoCell>
            <InfoCell $w={183}>
              <Value $w={12}>시</Value>
              <Value $w={40} $color={RED}>5,200</Value>
              <Value $w={21}>고</Value>
              <Value $w={40} $color={RED}>5,400</Value>
              <Value $w={22}>저</Value>
              <Value $w={39} $color={RED}>5,180</Value>
            </InfoCell>
            <PinkSwatch />
          </InfoBar>

          <ChartFrame>
            <PricePane />
            <PaneDivider />
            <VolumePane />
            <TimeAxis>
              {timeCells.map(([t, w]) => (
                <TimeCell key={t} $w={w}>{t}</TimeCell>
              ))}
            </TimeAxis>
          </ChartFrame>

          <ControlRow>
            <ScrollButton $w={16}>
              <Icon width="6" height="9" viewBox="0 0 6 9"><path d="M5 0L0 4.5 5 9z" fill="#000" stroke="none" /></Icon>
            </ScrollButton>
            <ScrollTrack />
            <ScrollButton $w={114} />
            <ScrollButton $w={18}>
              <Icon width="6" height="9" viewBox="0 0 6 9"><path d="M0 0l6 4.5L0 9z" fill="#000" stroke="none" /></Icon>
            </ScrollButton>
            <ScrollButton $w={18}>
              <Icon width="11" height="9" viewBox="0 0 11 9"><path d="M5 0L0 4.5 5 9zM11 0L6 4.5 11 9z" fill="#000" stroke="none" /></Icon>
            </ScrollButton>
            <ScrollButton $w={18}>
              <Icon width="9" height="9" viewBox="0 0 9 9"><rect width="9" height="9" fill="#000" stroke="none" /></Icon>
            </ScrollButton>
            <ScrollButton $w={17}>
              <Icon width="11" height="9" viewBox="0 0 11 9"><path d="M0 0l5 4.5L0 9zM6 0l5 4.5L6 9z" fill="#000" stroke="none" /></Icon>
            </ScrollButton>
            <SliderBox>
              <SliderRail />
              <SliderThumb />
              <SliderTicks />
            </SliderBox>
            <ViewTools>
              <ViewTool>
                <Icon width="14" height="14" viewBox="0 0 14 14"><path d="M.5.5h8v9h-8z" /><path d="M6.5 7.5h7v6h-7zM10 7.5v6M6.5 10.5h7" color="#333" /></Icon>
              </ViewTool>
              <ViewTool>
                <Icon width="14" height="14" viewBox="0 0 14 14"><path d="M.5.5h9v9h-9z" /><path d="M4.5 4.5h9v9h-9z" /><rect x="5" y="5" width="8" height="3" fill="#bbb" stroke="none" /></Icon>
              </ViewTool>
              <ViewTool>
                <Icon width="14" height="13" viewBox="0 0 14 13" strokeDasharray="1 1"><path d="M.5 1.5h13v10H.5z" /><path d="M1 9l4-3 3 2 5-4" /></Icon>
              </ViewTool>
              <ViewTool $on $w={16}>
                <Icon width="13" height="13" viewBox="0 0 13 13" color="#555" strokeWidth="1.5"><path d="M1 1h11M2 11V3l9 8M6 3H2" /></Icon>
              </ViewTool>
              <ViewTool>
                <Icon width="14" height="12" viewBox="0 0 14 12" color="#999"><path d="M0 9l3-4 2 3 3-5 2 4 3-3M0 1h14" style={{ shapeRendering: 'auto' }} /></Icon>
              </ViewTool>
              <ViewTool>
                <Icon width="13" height="13" viewBox="0 0 13 13" color="#888"><path d="M0 11l3-8 2 7 3-7 2 5 3 0" style={{ shapeRendering: 'auto' }} /></Icon>
              </ViewTool>
              <ViewTool>
                <Icon width="14" height="13" viewBox="0 0 14 13"><path d="M0 12l10-11M1 10l3-3 3 3 3-4 3 5" style={{ shapeRendering: 'auto' }} /></Icon>
              </ViewTool>
              <ViewTool>
                <Icon width="14" height="14" viewBox="0 0 14 14"><path d="M1 5l4-4h6v6l-4 3H1zM1 5h6v5M7 5l4-4" /><path d="M8 13V10M10.5 13V9M13 13V9" color="#222" /></Icon>
              </ViewTool>
              <ViewTool>
                <Icon width="14" height="14" viewBox="0 0 14 14"><path d="M3.5.5h10v8h-10z" /><rect x=".5" y="5.5" width="10" height="8" fill="#f0f0f0" color="#444" /><path d="M1.5 12l3-3 2 2 3-4" style={{ shapeRendering: 'auto' }} /></Icon>
              </ViewTool>
              <ViewTool>
                <Icon width="13" height="13" viewBox="0 0 13 13" strokeWidth="1.4" style={{ shapeRendering: 'auto' }}><circle cx="5.2" cy="5.2" r="4.2" /><path d="M8.3 8.3l4.2 4.2" /></Icon>
              </ViewTool>
              <ViewTool $w={17}>
                <Icon width="10" height="3" viewBox="0 0 10 3" strokeWidth="3"><path d="M0 1.5h9" /></Icon>
              </ViewTool>
              <ViewTool>
                <Icon width="11" height="11" viewBox="0 0 11 11" strokeWidth="3"><path d="M0 5.5h11M5.5 0v11" /></Icon>
              </ViewTool>
              <ViewTool>
                <Icon width="11" height="11" viewBox="0 0 11 11" strokeWidth="2" style={{ shapeRendering: 'auto' }}><path d="M1 11L5.5 1 10 11M2.5 7.5h6" /></Icon>
              </ViewTool>
            </ViewTools>
          </ControlRow>
        </Content>
      </Window>
    </>
  );
}
